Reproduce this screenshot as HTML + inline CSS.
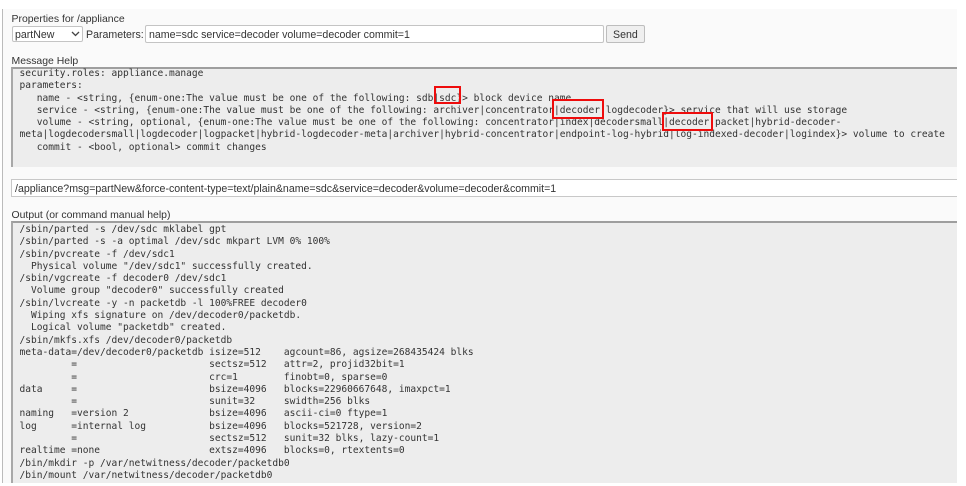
<!DOCTYPE html>
<html><head><meta charset="utf-8">
<style>
html,body{margin:0;padding:0;background:#fff;}
body{width:966px;height:486px;position:relative;overflow:hidden;}
div{position:absolute;box-sizing:border-box;}
.t{font-family:"Liberation Sans",sans-serif;font-size:10.6px;color:#333;white-space:pre;line-height:14px;filter:blur(.3px);}
.l{font-size:10.45px;}
.m{font-family:"DejaVu Sans Mono",monospace;font-size:9.56px;color:#333;white-space:pre;line-height:12.3px;filter:blur(.3px);}
.r{border:2px solid #ee0c0c;}
.box{background:#ededed;border-top:2px solid #9e9e9e;border-left:2px solid #a8a8a8;}
.inp{background:#fff;border:1px solid #c4c4c4;border-radius:2px;}
</style></head><body>
<div style="left:2px;top:9px;width:955px;height:474px;background:#fafafa;border-left:1px solid #bbb;"></div>
<div class="t l" style="left:11.5px;top:13px;">Properties for /appliance</div>
<div class="inp" style="left:11.5px;top:26px;width:71px;height:16px;"></div>
<div class="t" style="left:15px;top:28px;">partNew</div>
<svg style="position:absolute;left:70px;top:30px" width="11" height="8"><path d="M2 2l3.5 3.5L9 2" fill="none" stroke="#444" stroke-width="1.3"/></svg>
<div class="t" style="left:86px;top:28px;">Parameters:</div>
<div class="inp" style="left:145px;top:25px;width:459px;height:18px;"></div>
<div class="t" style="left:149px;top:28px;">name=sdc service=decoder volume=decoder commit=1</div>
<div class="inp" style="left:606px;top:25px;width:39px;height:18px;background:#efefef;border-color:#bdbdbd;"></div>
<div class="t" style="left:613px;top:27.5px;">Send</div>
<div class="t l" style="left:11.5px;top:55px;">Message Help</div>
<div class="box" style="left:11px;top:67px;width:946px;height:100px;"></div>
<div class="m" style="left:19.5px;top:68px;">security.roles: appliance.manage
parameters:
   name - &lt;string, {enum-one:The value must be one of the following: sdb|sdc}&gt; block device name
   service - &lt;string, {enum-one:The value must be one of the following: archiver|concentrator|decoder|logdecoder}&gt; service that will use storage
   volume - &lt;string, optional, {enum-one:The value must be one of the following: concentrator|index|decodersmall|decoder|packet|hybrid-decoder-
meta|logdecodersmall|logdecoder|logpacket|hybrid-logdecoder-meta|archiver|hybrid-concentrator|endpoint-log-hybrid|log-indexed-decoder|logindex}&gt; volume to create
   commit - &lt;bool, optional&gt; commit changes</div>
<div class="r" style="left:434px;top:86px;width:27px;height:18px;"></div>
<div class="r" style="left:552px;top:99px;width:52px;height:20px;"></div>
<div class="r" style="left:662px;top:112px;width:51px;height:19px;"></div>
<div style="left:11px;top:179px;width:946px;height:18px;background:#fff;border-top:1px solid #c8c8c8;border-bottom:1px solid #c8c8c8;border-left:1px solid #c8c8c8;"></div>
<div class="t" style="left:15px;top:181.5px;">/appliance?msg=partNew&amp;force-content-type=text/plain&amp;name=sdc&amp;service=decoder&amp;volume=decoder&amp;commit=1</div>
<div class="t l" style="left:11.5px;top:208.5px;">Output (or command manual help)</div>
<div class="box" style="left:11px;top:221px;width:946px;height:262px;"></div>
<div class="m" style="left:19.5px;top:224px;">/sbin/parted -s /dev/sdc mklabel gpt
/sbin/parted -s -a optimal /dev/sdc mkpart LVM 0% 100%
/sbin/pvcreate -f /dev/sdc1
  Physical volume "/dev/sdc1" successfully created.
/sbin/vgcreate -f decoder0 /dev/sdc1
  Volume group "decoder0" successfully created
/sbin/lvcreate -y -n packetdb -l 100%FREE decoder0
  Wiping xfs signature on /dev/decoder0/packetdb.
  Logical volume "packetdb" created.
/sbin/mkfs.xfs /dev/decoder0/packetdb
meta-data=/dev/decoder0/packetdb isize=512    agcount=86, agsize=268435424 blks
         =                       sectsz=512   attr=2, projid32bit=1
         =                       crc=1        finobt=0, sparse=0
data     =                       bsize=4096   blocks=22960667648, imaxpct=1
         =                       sunit=32     swidth=256 blks
naming   =version 2              bsize=4096   ascii-ci=0 ftype=1
log      =internal log           bsize=4096   blocks=521728, version=2
         =                       sectsz=512   sunit=32 blks, lazy-count=1
realtime =none                   extsz=4096   blocks=0, rtextents=0
/bin/mkdir -p /var/netwitness/decoder/packetdb0
/bin/mount /var/netwitness/decoder/packetdb0</div>
</body></html>
